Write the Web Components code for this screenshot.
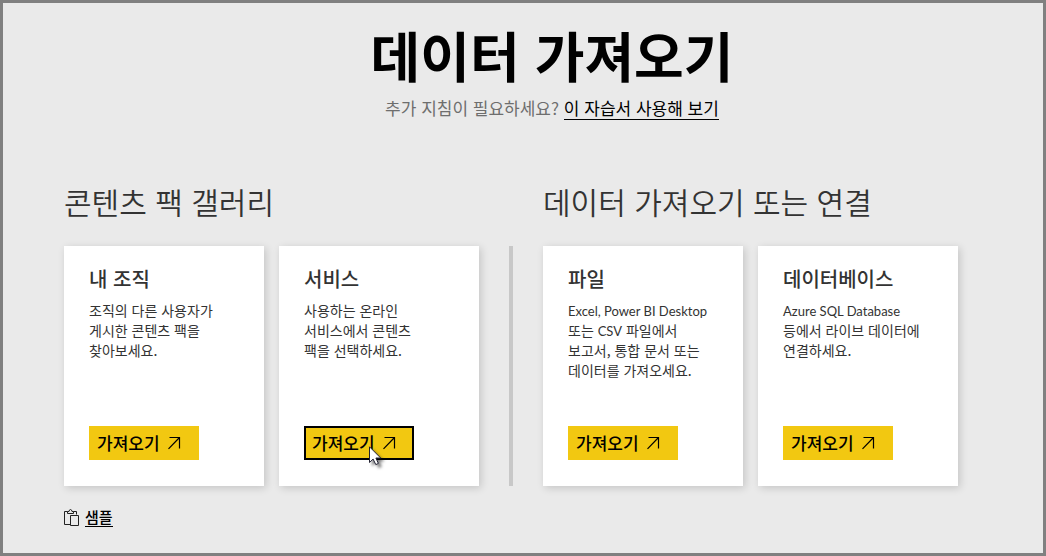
<!DOCTYPE html>
<html lang="ko">
<head>
<meta charset="utf-8">
<title>데이터 가져오기</title>
<style>
  body {
    margin: 0;
    font-family: "Noto Sans CJK KR", sans-serif;
    color: #333;
    background: #eaeaea;
  }
  [lang="en"] { font-family: Lato, sans-serif; font-size: 13px; line-height: 14px; }
</style>
</head>
<body>
<get-data-page>
  <page-header slot="header">
    <span slot="title">데이터 가져오기</span>
    <span slot="hint">추가 지침이 필요하세요?</span>
    <span slot="link">이 자습서 사용해 보기</span>
  </page-header>
  <card-group>
    <span slot="heading">콘텐츠 팩 갤러리</span>
    <data-card>
      <span slot="title">내 조직</span>
      조직의 다른 사용자가<br>게시한 콘텐츠 팩을<br>찾아보세요.
    </data-card>
    <data-card active>
      <span slot="title">서비스</span>
      사용하는 온라인<br>서비스에서 콘텐츠<br>팩을 선택하세요.
    </data-card>
  </card-group>
  <card-group>
    <span slot="heading">데이터 가져오기 또는 연결</span>
    <data-card>
      <span slot="title">파일</span>
      <span lang="en">Excel, Power BI Desktop</span><br>또는 <span lang="en">CSV</span> 파일에서<br>보고서, 통합 문서 또는<br>데이터를 가져오세요.
    </data-card>
    <data-card>
      <span slot="title">데이터베이스</span>
      <span lang="en">Azure SQL Database</span><br>등에서 라이브 데이터에<br>연결하세요.
    </data-card>
  </card-group>
  <sample-link slot="footer">샘플</sample-link>
</get-data-page>

<script>
  class BaseElement extends HTMLElement {
    constructor() {
      super();
      this.attachShadow({ mode: "open" }).innerHTML = this.constructor.markup;
    }
  }

  class GetDataPage extends BaseElement {
    static markup = `
      <style>
        :host {
          display: block;
          box-sizing: border-box;
          min-height: 100vh;
          border: 3px solid #808080;
          background: #eaeaea;
        }
        main {
          display: flex;
          gap: 64px;
          padding: 61px 85px 0 61px;
        }
        ::slotted(card-group) { flex: 1; min-width: 0; }
        footer { padding: 20px 61px 0; }
      </style>
      <slot name="header"></slot>
      <main><slot></slot></main>
      <footer><slot name="footer"></slot></footer>`;
  }

  class PageHeader extends BaseElement {
    static markup = `
      <style>
        :host { display: block; padding: 17px 0 0 58px; text-align: center; }
        h1 { margin: 0; font-size: 54px; line-height: 70px; font-weight: 700; color: #000; }
        p { margin: 6px 0 0; font-size: 17px; line-height: 24px; color: #6e6e6e; }
        a { color: #000; text-decoration: none; display: inline-block; line-height: 22px; border-bottom: 1px solid #000; }
      </style>
      <h1><slot name="title"></slot></h1>
      <p><slot name="hint"></slot> <a href="#"><slot name="link"></slot></a></p>`;
  }

  class CardGroup extends BaseElement {
    static markup = `
      <style>
        :host { display: block; }
        h2 { margin: 0 0 25px; font-size: 30px; line-height: 40px; font-weight: 350; white-space: nowrap; }
        .cards { display: flex; gap: 15px; position: relative; }
        ::slotted(data-card) { flex: 1; min-width: 0; }
        :host(:not(:first-of-type)) .cards::before {
          content: "";
          position: absolute;
          top: 0;
          bottom: 0;
          left: -34px;
          width: 4px;
          background: #c8c8c8;
        }
      </style>
      <h2><slot name="heading"></slot></h2>
      <div class="cards"><slot></slot></div>`;
  }

  class DataCard extends BaseElement {
    static markup = `
      <style>
        :host {
          display: flex;
          flex-direction: column;
          align-items: flex-start;
          box-sizing: border-box;
          min-height: 240px;
          padding: 18px 20px 26px 25px;
          background: #fff;
          box-shadow: 2px 2px 8px rgba(0, 0, 0, .16);
        }
        h3 { margin: 0 0 6px; font-size: 20px; line-height: 30px; font-weight: 500; }
        p { margin: 0; font-size: 14px; line-height: 20px; white-space: nowrap; }
        button {
          display: flex;
          align-items: center;
          gap: 8px;
          box-sizing: border-box;
          width: 110px;
          height: 34px;
          margin: 0;
          padding: 0 6px;
          border: 2px solid #f2c811;
          background: #f2c811;
          color: #000;
          font: 500 17px/24px "Noto Sans CJK KR", sans-serif;
          white-space: nowrap;
        }
        :host([active]) button { border-color: #000; }
        .wrap { position: relative; margin-top: auto; }
        svg { flex: none; }
        .pointer { display: none; position: absolute; left: 64px; top: 20px; }
        :host([active]) .pointer { display: block; }
      </style>
      <h3><slot name="title"></slot></h3>
      <p><slot></slot></p>
      <div class="wrap">
        <button type="button">가져오기
          <svg width="13" height="14" viewBox="0 0 13 14" fill="none" stroke="#000" stroke-width="1.2"><path d="M1.500 1.500H11.500V12.500M11.500 1.500L.5 12.800"/></svg>
        </button>
        <svg class="pointer" width="24" height="28" viewBox="0 0 24 28">
          <defs><filter id="s" x="-50%" y="-50%" width="200%" height="200%"><feDropShadow dx="3" dy="3" stdDeviation="1.6" flood-opacity=".5"/></filter></defs>
          <path filter="url(#s)" d="M1.5 .8V16.500L5.1 13.100L7.800 18.600L10.400 17.400L7.900 12H12.700Z" fill="#fff" stroke="#223" stroke-width="1"/>
        </svg>
      </div>`;
  }

  class SampleLink extends BaseElement {
    static markup = `
      <style>
        :host { display: flex; align-items: center; gap: 6px; height: 22px; }
        a { color: #000; font-size: 15px; line-height: 18px; font-weight: 500; text-decoration: none; border-bottom: 1px solid #000; }
      </style>
      <svg width="15" height="17" viewBox="0 0 15 17" fill="none" stroke="#222" stroke-width="1">
        <path d="M6 15.500H.5V2.500H3.500M9.500 2.500H12.500V5.500M3.500 4.500V2.500H5Q5.200.5 6.500.5T8 2.500H9.500V4.500ZM6.500 6.500H14.500V16.500H6.500Z"/>
      </svg>
      <a href="#"><slot></slot></a>`;
  }

  customElements.define("get-data-page", GetDataPage);
  customElements.define("page-header", PageHeader);
  customElements.define("card-group", CardGroup);
  customElements.define("data-card", DataCard);
  customElements.define("sample-link", SampleLink);
</script>
</body>
</html>
